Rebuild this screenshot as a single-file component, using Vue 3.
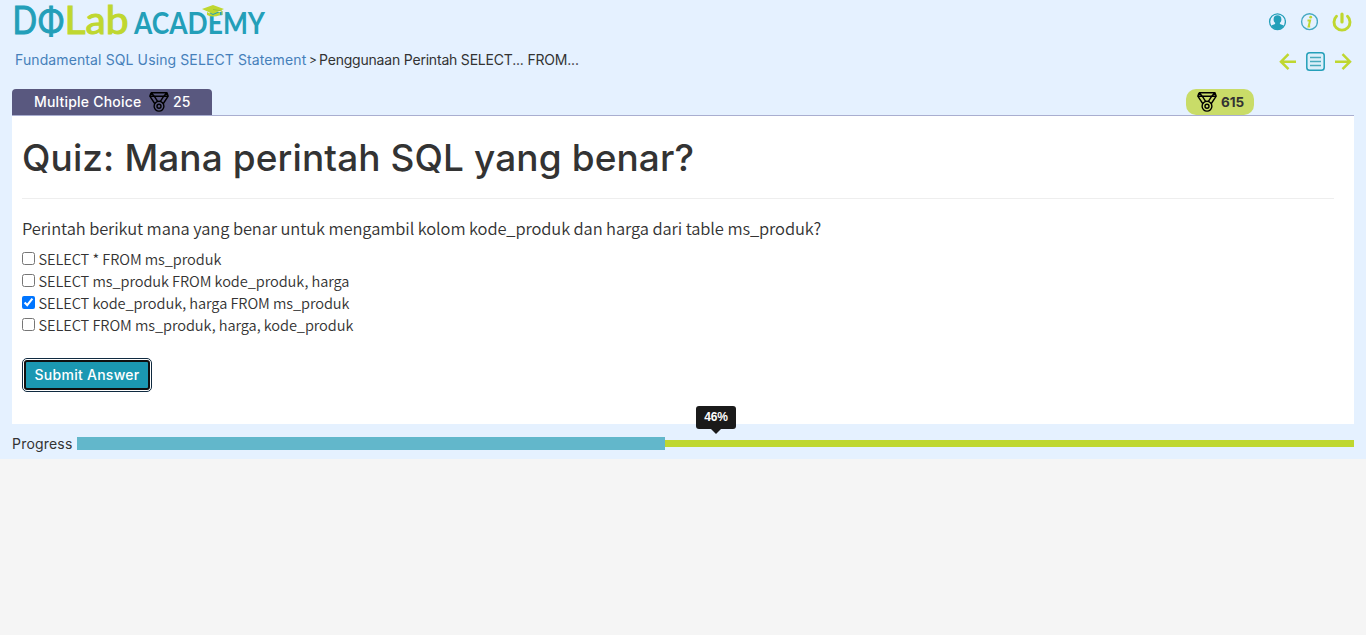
<script setup>
import { ref } from 'vue'

const options = ref([
  { text: 'SELECT * FROM ms_produk', checked: false },
  { text: 'SELECT ms_produk FROM kode_produk, harga', checked: false },
  { text: 'SELECT kode_produk, harga FROM ms_produk', checked: true },
  { text: 'SELECT FROM ms_produk, harga, kode_produk', checked: false },
])
const progress = 46
</script>

<template>
  <div class="page">
    <header class="top">
      <svg class="logo" width="266" height="42" viewBox="0 0 266 42">
        <text class="brand" y="34"><tspan class="teal" x="12.500" textLength="24.500" lengthAdjust="spacingAndGlyphs">D</tspan><tspan class="teal phi" x="38" textLength="26" lengthAdjust="spacingAndGlyphs">Φ</tspan><tspan class="lime" x="64.600" textLength="64" lengthAdjust="spacingAndGlyphs">Lab</tspan></text>
        <text class="academy" x="134" y="34" textLength="131" lengthAdjust="spacingAndGlyphs" fill="#239fb9">ACADEMY</text>
        <path d="M202 9 L213 5 L224 9 L213 14 Z M207 12 L213 15 L220 12 V15 Q213 18 207 15 Z" fill="#bfd730" />
        <path d="M213 9.5 L222 11 V15" fill="none" stroke="#9cbf38" stroke-width="1" />
      </svg>
      <nav class="icons">
        <svg width="18" height="18" viewBox="0 0 18 18">
          <circle cx="9.500" cy="8.700" r="7.900" fill="#e5f1ff" stroke="#239fb9" stroke-width="1.300" />
          <path d="M9.500 2.300c2.500 0 3.900 1.600 3.900 4 0 1.700-.6 2.800-1.500 3.500v1.200l3.900 1.600A7.600 7.600 0 0 1 9.500 16.400a7.600 7.600 0 0 1-6.300-3.800l3.900-1.600v-1.200C6.200 9.100 5.600 8 5.600 6.300 5.600 3.900 7 2.300 9.500 2.300Z" fill="#239fb9" />
        </svg>
        <svg width="18" height="18" viewBox="0 0 18 18">
          <circle cx="9.500" cy="8.700" r="7.900" fill="none" stroke="#45a9c2" stroke-width="1.400" />
          <circle cx="10.700" cy="4.200" r="1.400" fill="#bfd730" />
          <path d="M7.500 7.400h2.600L8.600 13.500h1.600" fill="none" stroke="#bfd730" stroke-width="2" />
        </svg>
        <svg width="20" height="20" viewBox="0 0 20 20">
          <path d="M4.500 4.300a8 8 0 1 0 11 0" fill="none" stroke="#bfd730" stroke-width="2.900" stroke-linecap="round" />
          <path d="M10 2v8" stroke="#bfd730" stroke-width="3.200" stroke-linecap="round" />
        </svg>
      </nav>
    </header>

    <div class="crumbs">
      <div class="trail"><a class="course">Fundamental SQL Using SELECT Statement</a><span class="sep">&gt;</span><span class="lesson">Penggunaan Perintah SELECT... FROM...</span></div>
      <nav class="pager">
        <svg width="17" height="18" viewBox="0 0 17 18"><path d="M9.500 1.200 2 8.700l7.500 7.500M2 8.700h15" fill="none" stroke="#bfd730" stroke-width="2.500" /></svg>
        <svg width="19" height="19" viewBox="0 0 19 19">
          <rect x=".8" y=".8" width="17.400" height="17.400" rx="2.800" fill="#dceffa" stroke="#239fb9" stroke-width="1.500" />
          <path d="M4 5.500h11M4 9.500h11M4 13.500h11" stroke="#48aabd" stroke-width="1.400" />
        </svg>
        <svg width="17" height="18" viewBox="0 0 17 18"><path d="M7.500 1.200 15 8.700l-7.500 7.500M15 8.700H0" fill="none" stroke="#bfd730" stroke-width="2.500" /></svg>
      </nav>
    </div>

    <div class="tabs">
      <div class="tab">
        <span class="kind">Multiple Choice</span>
        <svg width="20" height="20" viewBox="0 0 20 20">
          <g fill="none" stroke="#000" stroke-width="1.400" stroke-linejoin="round"><path d="M2 .8h16l1.200 3.400L14 12M2 .8.800 4.200 6 12M1 4.300h18M5.400 4.300l3.200 5M14.600 4.300l-3.200 5M2 .8l3.400 3.500M18 .8l-3.400 3.500" /><circle cx="10" cy="14.200" r="4.900" /><circle cx="10" cy="14.200" r="2" /></g>
        </svg>
        <span class="worth">25</span>
      </div>
      <div class="score">
        <svg width="20" height="20" viewBox="0 0 20 20">
          <g fill="none" stroke="#000" stroke-width="1.400" stroke-linejoin="round"><path d="M2 .8h16l1.200 3.400L14 12M2 .8.800 4.200 6 12M1 4.300h18M5.400 4.300l3.200 5M14.600 4.300l-3.200 5M2 .8l3.400 3.500M18 .8l-3.400 3.500" /><circle cx="10" cy="14.200" r="4.900" /><circle cx="10" cy="14.200" r="2" /></g>
        </svg>
        <span class="total">615</span>
      </div>
    </div>

    <main class="card">
      <h1>Quiz: Mana perintah SQL yang benar?</h1>
      <p class="question">Perintah berikut mana yang benar untuk mengambil kolom kode_produk dan harga dari table ms_produk?</p>
      <label v-for="o in options" :key="o.text" class="option">
        <input v-model="o.checked" type="checkbox" /><span>{{ o.text }}</span>
      </label>
      <button class="submit">Submit Answer</button>
    </main>

    <footer class="progress">
      <span class="label">Progress</span>
      <div class="track">
        <div class="bar" :style="{ width: progress + '%' }"></div>
        <div class="tip">{{ progress }}%</div>
      </div>
    </footer>
  </div>
</template>

<style>
body { background: #f5f5f5; }
</style>

<style scoped>
* { box-sizing: border-box; }
.page {
  height: 459px;
  background: #e5f1ff;
  color: #333;
  font: 14px/20px Inter, "Open Sans", sans-serif;
  white-space: nowrap;
}
svg { display: block; flex: none; }
.top { display: flex; justify-content: space-between; height: 45px; padding-right: 14px; }
.logo { overflow: visible; }
.brand { font: 400 38px Lato, sans-serif; stroke-width: 1.1px; }
.phi { font-size: 36px; }
.teal { fill: #239fb9; stroke: #239fb9; }
.lime { fill: #bfd730; stroke: #bfd730; }
.academy { font: 700 30px Lato, sans-serif; }
.icons { display: flex; align-items: center; gap: 14px; height: 43px; }
.crumbs { display: flex; justify-content: space-between; height: 44px; padding: 5px 14px 0 15px; }
.trail { display: flex; }
.course { color: #4580ba; letter-spacing: .11px; width: 294px; }
.sep { width: 10px; font-size: 12px; }
.lesson { letter-spacing: -.2px; }
.pager { display: flex; align-items: center; gap: 10px; height: 23px; }
.tabs {
  display: flex;
  justify-content: space-between;
  height: 27px;
  margin: 0 12px;
  border-bottom: 1px solid #a9aed0;
}
.tab {
  display: flex;
  align-items: center;
  width: 200px;
  padding-left: 22px;
  background: #59587f;
  border-radius: 4px 4px 0 0;
  color: #fff;
  font-weight: 500;
}
.kind { width: 115px; letter-spacing: .2px; }
.worth { margin-left: 4px; }
.score {
  display: flex;
  align-items: center;
  width: 68px;
  margin-right: 100px;
  padding-left: 11px;
  background: #c9dc68;
  border-radius: 10px;
  font-weight: 700;
}
.total { margin-left: 4px; font-size: 13.500px; }
.card { height: 308px; margin: 0 12px; padding: 0 20px 0 10px; background: #fff; }
h1 {
  height: 83px;
  margin: 0 0 16px;
  padding-top: 22px;
  border-bottom: 1px solid #eee;
  font-size: 37px;
  font-weight: 500;
  letter-spacing: .1px;
  line-height: 40px;
}
.question { margin: 0; height: 33px; font: 350 16.500px/26px "Noto Sans CJK SC", sans-serif; letter-spacing: -.11px; }
.option { display: flex; height: 22px; font: 350 14.600px/22px "Noto Sans CJK SC", sans-serif; letter-spacing: -.07px; }
.option input { width: 13px; height: 13px; margin: 4px 3.500px 0 0; }
.submit {
  display: block;
  width: 126px;
  height: 30px;
  margin: 24px 0 0 2px;
  padding: 0;
  border: 2px solid #101010;
  border-radius: 3px;
  outline: 1px solid #102a40;
  outline-offset: 1px;
  background: #1b98b2;
  color: #fff;
  font: 500 14px/20px Inter, sans-serif;
  letter-spacing: .26px;
}
.progress { display: flex; height: 35px; padding: 10px 12px 0; }
.label { width: 65.200px; letter-spacing: .2px; }
.track { position: relative; flex: 1; height: 20px; background: linear-gradient(#bfd730, #bfd730) 0 6px / 100% 7px no-repeat; }
.bar { height: 13px; margin-top: 3px; background: #62b7cb; }
.tip {
  position: absolute;
  left: 618.800px;
  top: -28px;
  width: 40px;
  height: 23px;
  border-radius: 3px;
  background: #1a1a1a;
  color: #fff;
  font: 700 12px/22px "Liberation Sans", sans-serif;
  letter-spacing: -.1px;
  text-align: center;
}
.tip::after {
  content: "";
  position: absolute;
  top: 23px;
  left: 15px;
  border: 5px solid transparent;
  border-top-color: #1a1a1a;
  border-bottom: 0;
}
</style>
